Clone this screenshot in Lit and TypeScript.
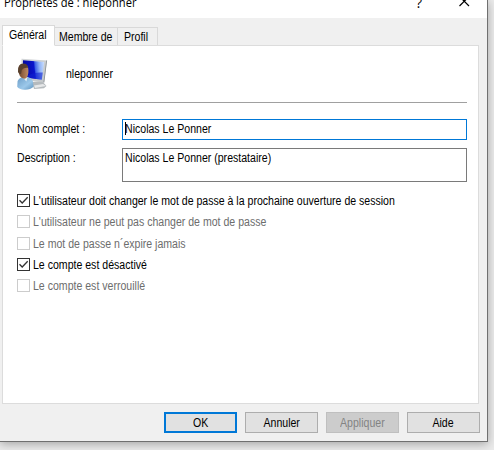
import { LitElement, html, css, svg } from "lit";
import { customElement } from "lit/decorators.js";

interface Option {
  label: string;
  checked: boolean;
  enabled: boolean;
}

const OPTIONS: Option[] = [
  { label: "L'utilisateur doit changer le mot de passe à la prochaine ouverture de session", checked: true, enabled: true },
  { label: "L'utilisateur ne peut pas changer de mot de passe", checked: false, enabled: false },
  { label: "Le mot de passe n´expire jamais", checked: false, enabled: false },
  { label: "Le compte est désactivé", checked: true, enabled: true },
  { label: "Le compte est verrouillé", checked: false, enabled: false },
];

const userIcon = svg`
  <defs>
    <linearGradient id="scr" x1="0" y1="0.1" x2="1" y2="0">
      <stop offset="0" stop-color="#0509a0"/><stop offset="0.5" stop-color="#0a14cc"/>
      <stop offset="0.56" stop-color="#3f63e6"/><stop offset="0.75" stop-color="#8fb2f6"/><stop offset="1" stop-color="#cfe2ff"/>
    </linearGradient>
    <linearGradient id="frame" x1="0" y1="0" x2="1" y2="1">
      <stop offset="0" stop-color="#d4d7d9"/><stop offset="1" stop-color="#c2c6c9"/>
    </linearGradient>
    <linearGradient id="shirt" x1="0" y1="0" x2="1" y2="1">
      <stop offset="0" stop-color="#6b9cc6"/><stop offset="0.6" stop-color="#9cc8ea"/><stop offset="1" stop-color="#5f93bd"/>
    </linearGradient>
    <linearGradient id="skin" x1="0" y1="0" x2="1" y2="0">
      <stop offset="0" stop-color="#6d452b"/><stop offset="0.5" stop-color="#9a6845"/><stop offset="1" stop-color="#bd8c66"/>
    </linearGradient>
  </defs>
  <path d="M15 24 L25 23 L29.5 28 L27 30.3 L17 31 Z" fill="#b5babd"/>
  <path d="M17 27.5 L26 26 L29 28 L18 30 Z" fill="#e6e8e9"/>
  <path d="M4.5 0.8 L30 2.4 L27 24.6 L4 21.5 Z" fill="url(#frame)"/>
  <path d="M29.2 2.6 L30.1 2.6 L27.3 24.6 L26.4 24.4 Z" fill="#8f969b"/>
  <path d="M6 2.2 L27.2 3.9 L24.8 21.8 L5.5 19 Z" fill="url(#scr)"/>
  <path d="M6 19 L24.8 21.8 L25.8 14.5 Q17 14 12 17 Z" fill="#0f22d0" opacity="0.6"/>
  <path d="M0.6 23 Q3 18.8 8 18.8 Q14.2 19 15.8 23 L16.6 28.7 Q13 32 7.5 31.7 Q2 31.4 0.2 28.7 Z" fill="url(#shirt)"/>
  <path d="M5.5 19 L10.5 19 L9.4 23.5 Z" fill="#e4f0f8"/>
  <path d="M1.4 12.8 Q1.2 6.3 6.4 6 Q11.4 6.3 11.4 12.2 Q11.8 19 7.9 20.8 Q3.2 20.4 2 15.8 Z" fill="url(#skin)"/>
  <path d="M1 14 Q0.4 5.8 6.4 5.6 Q10.4 5.6 11.2 9.8 Q7 9 4.8 12 L4 16 L2.4 15.8 Z" fill="#59402d"/>
`;

@customElement("app-root")
export class AppRoot extends LitElement {
  static styles = css`
    :host {
      display: block;
      width: 494px;
      height: 450px;
      overflow: hidden;
      background: #ebebeb;
      font: 12px/14px "Liberation Sans", Arial, sans-serif;
      color: #000;
      white-space: nowrap;
    }
    * { box-sizing: border-box; }
    .txt {
      display: inline-block;
      transform: scaleX(0.88);
      transform-origin: 0 50%;
    }
    .button .txt { transform-origin: 50% 50%; }
    .window {
      width: 488px;
      height: 442px;
      background: #f0f0f0;
      border: solid #707070;
      border-width: 0 1px 1px 0;
      box-shadow: 0 2px 9px rgba(0, 0, 0, 0.3);
      display: flex;
      flex-direction: column;
    }
    .title {
      height: 18px;
      background: #fff;
      display: flex;
      flex: none;
    }
    .caption {
      font: 12px/16px "Open Sans", "Noto Sans", sans-serif;
      margin: -5px 0 0 4px;
      width: 412px;
    }
    .caption .txt { transform: scaleX(0.928); }
    .help {
      font: 14px/16px "Open Sans", "Noto Sans", sans-serif;
      margin-top: -5px;
      width: 43px;
    }
    .close { width: 11px; height: 11px; margin-top: -4px; }
    .tabs {
      display: flex;
      align-items: flex-end;
      height: 28px;
      padding-left: 2px;
      flex: none;
    }
    .tab {
      height: 19px;
      border: 1px solid #d9d9d9;
      border-left: 0;
      padding: 2px 0 0 4px;
      background: #f0f0f0;
    }
    .tab.active {
      height: 21px;
      width: 53px;
      border-left: 1px solid #d9d9d9;
      border-bottom-color: #fff;
      background: #fff;
      padding: 2px 0 0 6px;
      position: relative;
    }
    .t2 { width: 63px; }
    .t3 { width: 40px; padding-left: 6px; }
    .panel {
      margin: -1px 0 0 2px;
      width: 477px;
      height: 359px;
      border: 1px solid #dcdcdc;
      background: #fff;
      padding: 12px 11px 0 14px;
      flex: none;
    }
    .head { display: flex; height: 45px; border-bottom: 1px solid #a0a0a0; }
    .head svg { width: 32px; height: 32px; }
    .name { margin: 9px 0 0 17px; }
    .row { display: flex; }
    .row.first { margin-top: 16px; height: 21px; }
    .row.second { margin-top: 8px; height: 34px; }
    .label { width: 105px; padding-top: 3px; }
    .field { width: 345px; border: 1px solid #7a7a7a; padding: 2px 0 0 2px; display: flex; align-items: flex-start; }
    .field.focus { border-color: #0078d7; }
    .caret { width: 1px; height: 13px; background: #000; margin-right: -1px; }
    .options {
      display: grid;
      grid-template-rows: 21px 22px 21px 21px 13px;
      margin-top: 12px;
    }
    .option { display: flex; align-items: flex-start; gap: 3px; height: 13px; }
    .option.off { color: #6d6d6d; }
    .box { width: 13px; height: 13px; border: 1px solid #333; flex: none; display: block; }
    .box svg { display: block; }
    .off .box { border-color: #ccc; }
    .buttons { display: flex; gap: 8px; margin: 8px 0 0 164px; }
    .button {
      width: 73px;
      height: 21px;
      border: 1px solid #adadad;
      background: #e1e1e1;
      text-align: center;
      padding-top: 3px;
    }
    .button.default { border: 2px solid #0078d7; padding-top: 2px; }
    .button.disabled { background: #ccc; border-color: #bfbfbf; color: #838383; }
  `;

  render() {
    return html`
      <div class="window">
        <div class="title">
          <div class="caption"><span class="txt">Propriétés de : nleponner</span></div>
          <div class="help">?</div>
          <svg class="close" viewBox="0 0 11 11"><path d="M0.5 0.5 L10 10 M10 0.5 L0.5 10" stroke="#000" stroke-width="1.2" fill="none"/></svg>
        </div>
        <div class="tabs">
          <div class="tab active"><span class="txt">Général</span></div>
          <div class="tab t2"><span class="txt">Membre de</span></div>
          <div class="tab t3"><span class="txt">Profil</span></div>
        </div>
        <div class="panel">
          <div class="head">
            <svg viewBox="0 0 32 32">${userIcon}</svg>
            <div class="name"><span class="txt">nleponner</span></div>
          </div>
          <div class="row first">
            <div class="label"><span class="txt">Nom complet :</span></div>
            <div class="field focus"><span class="caret"></span><span class="txt">Nicolas Le Ponner</span></div>
          </div>
          <div class="row second">
            <div class="label"><span class="txt">Description :</span></div>
            <div class="field"><span class="txt">Nicolas Le Ponner (prestataire)</span></div>
          </div>
          <div class="options">
            ${OPTIONS.map(
              (o) => html`<div class="option ${o.enabled ? "" : "off"}">
                <span class="box">${o.checked
                  ? html`<svg width="11" height="11" viewBox="0 0 11 11"><path d="M1.5 5.2 L4.2 8 L9.7 2.3" stroke="#333" stroke-width="1.3" fill="none"/></svg>`
                  : ""}</span>
                <span class="txt">${o.label}</span>
              </div>`
            )}
          </div>
        </div>
        <div class="buttons">
          <div class="button default"><span class="txt">OK</span></div>
          <div class="button"><span class="txt">Annuler</span></div>
          <div class="button disabled"><span class="txt">Appliquer</span></div>
          <div class="button"><span class="txt">Aide</span></div>
        </div>
      </div>
    `;
  }
}
